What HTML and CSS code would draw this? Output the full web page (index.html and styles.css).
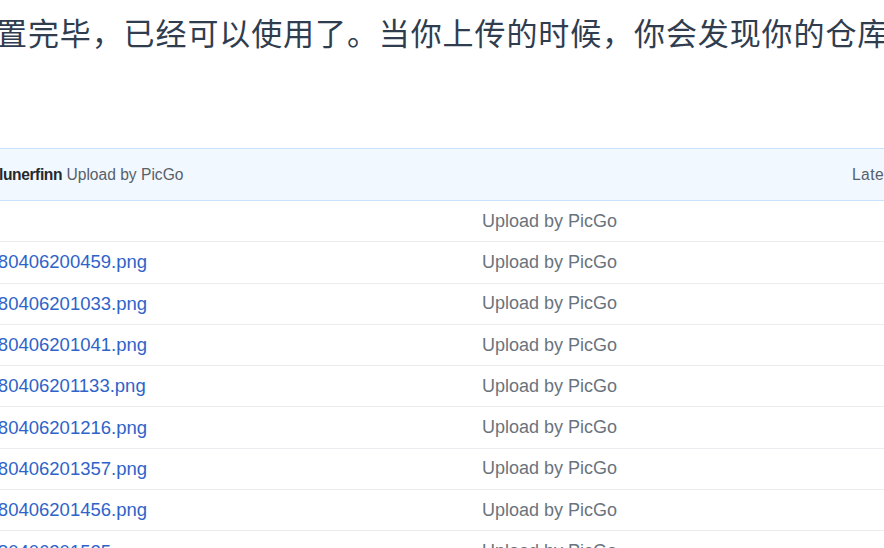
FILE: index.html
```html
<!DOCTYPE html>
<html lang="zh-CN">
<head>
<meta charset="utf-8">
<title>PicGo</title>
<link rel="stylesheet" href="styles.css">
</head>
<body>
<div class="viewport">
  <p class="lead">置完毕，已经可以使用了。当你上传的时候，你会发现你的仓库里</p>

  <div class="file-table">
    <div class="commit-bar">
      <div class="commit-left"><span class="author">lunerfinn</span> <span class="commit-msg">Upload by PicGo</span></div>
      <div class="commit-right">Latest commit 3a1f2c0 on 6 Apr</div>
    </div>
    <div class="file-row"><span class="file-name"></span><span class="file-msg">Upload by PicGo</span></div>
    <div class="file-row"><a class="file-name" href="#">20180406200459.png</a><span class="file-msg">Upload by PicGo</span></div>
    <div class="file-row"><a class="file-name" href="#">20180406201033.png</a><span class="file-msg">Upload by PicGo</span></div>
    <div class="file-row"><a class="file-name" href="#">20180406201041.png</a><span class="file-msg">Upload by PicGo</span></div>
    <div class="file-row"><a class="file-name" href="#">20180406201133.png</a><span class="file-msg">Upload by PicGo</span></div>
    <div class="file-row"><a class="file-name" href="#">20180406201216.png</a><span class="file-msg">Upload by PicGo</span></div>
    <div class="file-row"><a class="file-name" href="#">20180406201357.png</a><span class="file-msg">Upload by PicGo</span></div>
    <div class="file-row"><a class="file-name" href="#">20180406201456.png</a><span class="file-msg">Upload by PicGo</span></div>
    <div class="file-row"><a class="file-name" href="#">20180406201525.png</a><span class="file-msg">Upload by PicGo</span></div>
  </div>
</div>
</body>
</html>
```

FILE: styles.css
```css
html, body {
  margin: 0;
  padding: 0;
  background: #ffffff;
}

body {
  width: 884px;
  height: 548px;
  overflow: hidden;
}

.viewport {
  width: 884px;
  overflow: hidden;
}

.lead {
  margin: 0 0 0 -4px;
  padding-top: 9px;
  font-family: "Noto Sans CJK SC", sans-serif;
  font-size: 31px;
  letter-spacing: 0.9px;
  line-height: 45px;
  color: #2f3d4f;
  white-space: nowrap;
}

.file-table {
  margin-top: 94px;
  width: 884px;
}

.commit-bar {
  box-sizing: border-box;
  height: 53px;
  display: flex;
  align-items: center;
  background: #f1f8ff;
  border-top: 1px solid #c8e1ff;
  border-bottom: 1px solid #c8e1ff;
  font-family: "Liberation Sans", Arial, sans-serif;
  font-size: 15.6px;
  white-space: nowrap;
}

.commit-left {
  flex: 0 0 853px;
  margin-left: -1px;
}

.author {
  font-weight: bold;
  letter-spacing: -0.4px;
  color: #24292e;
}

.commit-msg {
  color: #586069;
}

.commit-right {
  flex: 0 0 auto;
  color: #586069;
  letter-spacing: 0.4px;
}

.file-row {
  box-sizing: border-box;
  height: 41.3px;
  display: grid;
  grid-template-columns: 515px 1fr;
  align-items: center;
  margin-left: -33px;
  border-bottom: 1px solid #eaecef;
  font-family: "Liberation Sans", Arial, sans-serif;
  white-space: nowrap;
}

.file-name {
  font-size: 18.5px;
  color: #2e63c9;
  text-decoration: none;
}

.file-msg {
  font-size: 18px;
  color: #6a737d;
}
```
